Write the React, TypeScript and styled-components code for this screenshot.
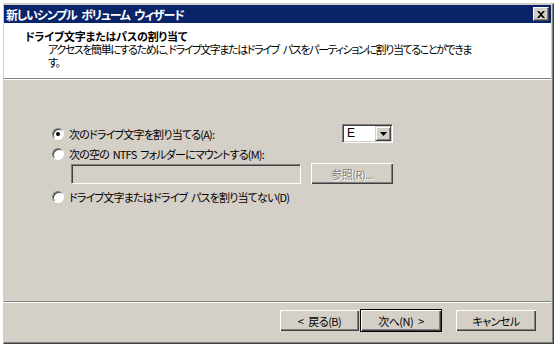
import React from 'react';
import styled, { createGlobalStyle } from 'styled-components';

const GlobalStyle = createGlobalStyle`
  html, body {
    margin: 0;
    padding: 0;
    background: #ffffff;
  }
  body {
    font-family: "Noto Sans CJK JP", "Liberation Sans", sans-serif;
    font-size: 11px;
    font-feature-settings: "palt";
  }
`;

const Desktop = styled.div`
  width: 557px;
  height: 346px;
  box-sizing: border-box;
  padding: 3px 0 0 3px;
  background: #ffffff;
  overflow: hidden;
`;

const Window = styled.div`
  width: 551px;
  height: 341px;
  box-sizing: border-box;
  background: #d4d0c8;
  border-top: 1px solid #d4d0c8;
  border-left: 1px solid #d4d0c8;
  border-right: 1px solid #404040;
  border-bottom: 1px solid #404040;
  box-shadow: inset -1px -1px 0 #808080;
  padding: 1px 2px 2px 0;
  display: flex;
  flex-direction: column;
`;

const TitleBar = styled.div`
  height: 18px;
  background: #0a246a;
  display: flex;
  align-items: center;
  padding: 0 2px 0 2px;
  color: #ffffff;
  font-weight: 700;
  font-size: 12px;
`;

const TitleText = styled.span`
  flex: 1;
  white-space: pre;
  letter-spacing: -1.2px;
  word-spacing: 3px;
`;

const CloseButton = styled.div`
  width: 16px;
  height: 14px;
  box-sizing: border-box;
  background: #d4d0c8;
  border-top: 1px solid #ffffff;
  border-left: 1px solid #ffffff;
  border-right: 1px solid #404040;
  border-bottom: 1px solid #404040;
  box-shadow: inset -1px -1px 0 #808080;
  display: flex;
  align-items: center;
  justify-content: center;
`;

const Header = styled.div`
  height: 55px;
  background: #ffffff;
  box-sizing: border-box;
  padding: 7px 0 0 21px;
  color: #000000;
`;

const HeaderTitle = styled.div`
  font-weight: 700;
  line-height: 13px;
  letter-spacing: -0.2px;
`;

const HeaderLine = styled.div`
  margin-left: 23px;
  line-height: 13px;
  white-space: pre;
  letter-spacing: -1.4px;
  word-spacing: 3px;
  &:first-of-type {
    margin-top: 1px;
  }
`;

const Separator = styled.div`
  height: 1px;
  background: #808080;
  border-bottom: 1px solid #ffffff;
`;

const Body = styled.div`
  flex: 1;
  box-sizing: border-box;
  padding: 44px 0 0 48px;
`;

const Options = styled.div`
  width: 341px;
  display: flex;
  flex-direction: column;
`;

const OptionRow = styled.div<{ $gap?: number }>`
  display: flex;
  align-items: center;
  min-height: 16px;
  margin-top: ${p => p.$gap ?? 0}px;
`;

const Radio = styled.span<{ $checked?: boolean }>`
  position: relative;
  width: 12px;
  height: 12px;
  box-sizing: border-box;
  border-radius: 50%;
  background: #ffffff;
  border: 1px solid;
  border-color: #808080 #ffffff #ffffff #808080;
  box-shadow: inset 1px 1px 0 #404040;
  flex-shrink: 0;
  &::after {
    content: '';
    display: ${p => (p.$checked ? 'block' : 'none')};
    position: absolute;
    left: 3px;
    top: 3px;
    width: 4px;
    height: 4px;
    border-radius: 50%;
    background: #000000;
  }
`;

const Label = styled.span`
  margin-left: 5px;
  line-height: 14px;
  letter-spacing: -0.8px;
  word-spacing: 2px;
  white-space: pre;
`;

const Combo = styled.div`
  margin-left: auto;
  width: 51px;
  height: 19px;
  box-sizing: border-box;
  background: #ffffff;
  border-top: 1px solid #808080;
  border-left: 1px solid #808080;
  border-right: 1px solid #ffffff;
  border-bottom: 1px solid #ffffff;
  box-shadow: inset 1px 1px 0 #404040, inset -1px -1px 0 #d4d0c8;
  display: flex;
  align-items: stretch;
  padding: 1px;
`;

const ComboValue = styled.span`
  flex: 1;
  padding-left: 3px;
  line-height: 15px;
  font-size: 12px;
  font-family: "Liberation Sans", sans-serif;
`;

const ComboArrow = styled.span`
  width: 16px;
  box-sizing: border-box;
  background: #d4d0c8;
  border-top: 1px solid #d4d0c8;
  border-left: 1px solid #d4d0c8;
  border-right: 1px solid #404040;
  border-bottom: 1px solid #404040;
  box-shadow: inset 1px 1px 0 #ffffff, inset -1px -1px 0 #808080;
  display: flex;
  align-items: center;
  justify-content: center;
`;

const FieldRow = styled.div`
  display: flex;
  align-items: center;
  margin: 1px 0 0 19px;
  gap: 10px;
`;

const TextField = styled.div`
  width: 230px;
  height: 20px;
  box-sizing: border-box;
  background: #d4d0c8;
  border-top: 1px solid #808080;
  border-left: 1px solid #808080;
  border-right: 1px solid #ffffff;
  border-bottom: 1px solid #ffffff;
  box-shadow: inset 1px 1px 0 #404040, inset -1px -1px 0 #d4d0c8;
`;

const Button = styled.button<{ $width: number; $default?: boolean }>`
  width: ${p => p.$width}px;
  height: 23px;
  margin: 0;
  padding: 0;
  box-sizing: border-box;
  background: #d4d0c8;
  font-family: inherit;
  font-size: 11px;
  font-feature-settings: "palt";
  letter-spacing: -0.5px;
  word-spacing: 3px;
  white-space: pre;
  color: #000000;
  border: 1px solid ${p => (p.$default ? '#000000' : 'transparent')};
  box-shadow: inset 1px 1px 0 #ffffff, inset -1px -1px 0 #404040, inset -2px -2px 0 #808080;
  &:disabled {
    color: #808080;
    text-shadow: 1px 1px 0 #ffffff;
  }
`;

const BrowseButton = styled(Button)`
  height: 21px;
  border: none;
`;

const Footer = styled.div`
  height: 38px;
  box-sizing: border-box;
  padding: 6px 14px 0 0;
  display: flex;
  justify-content: flex-end;
  align-items: flex-start;
`;

const CancelButton = styled(Button)`
  margin-left: 13px;
`;

const App: React.FC = () => {
    return (
        <Desktop>
            <GlobalStyle />
            <Window>
                <TitleBar>
                    <TitleText>新しいシンプル ボリューム ウィザード</TitleText>
                    <CloseButton>
                        <svg width="8" height="7" viewBox="0 0 8 7">
                            <path d="M0 0h2l2 2 2-2h2L5 3.5 8 7H6L4 5 2 7H0l3-3.5z" fill="#000" />
                        </svg>
                    </CloseButton>
                </TitleBar>
                <Header>
                    <HeaderTitle>ドライブ文字またはパスの割り当て</HeaderTitle>
                    <HeaderLine>アクセスを簡単にするために、ドライブ文字またはドライブ パスをパーティションに割り当てることができま</HeaderLine>
                    <HeaderLine>す。</HeaderLine>
                </Header>
                <Separator />
                <Body>
                    <Options>
                        <OptionRow>
                            <Radio $checked />
                            <Label>次のドライブ文字を割り当てる(A):</Label>
                            <Combo>
                                <ComboValue>E</ComboValue>
                                <ComboArrow>
                                    <svg width="7" height="4" viewBox="0 0 7 4">
                                        <path d="M0 0h7L3.5 4z" fill="#000" />
                                    </svg>
                                </ComboArrow>
                            </Combo>
                        </OptionRow>
                        <OptionRow $gap={3}>
                            <Radio />
                            <Label>次の空の NTFS フォルダーにマウントする(M):</Label>
                        </OptionRow>
                        <FieldRow>
                            <TextField />
                            <BrowseButton $width={82} disabled>
                                参照(R)...
                            </BrowseButton>
                        </FieldRow>
                        <OptionRow $gap={5}>
                            <Radio />
                            <Label>ドライブ文字またはドライブ パスを割り当てない(D)</Label>
                        </OptionRow>
                    </Options>
                </Body>
                <Separator />
                <Footer>
                    <Button $width={81}>{'< 戻る(B)'}</Button>
                    <Button $width={82} $default>
                        {'次へ(N) >'}
                    </Button>
                    <CancelButton $width={82}>キャンセル</CancelButton>
                </Footer>
            </Window>
        </Desktop>
    );
};

export default App;
